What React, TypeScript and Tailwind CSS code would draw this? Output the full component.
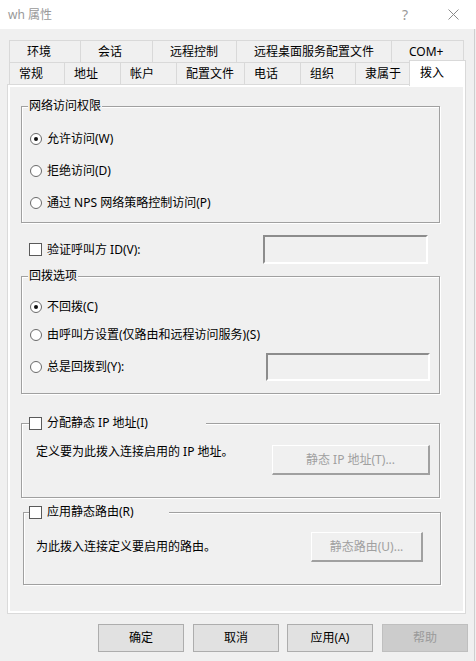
import type { ReactNode } from "react";

const row1 = [
  { label: "环境", w: "w-[71px]" },
  { label: "会话", w: "w-[72px]" },
  { label: "远程控制", w: "w-[84px]" },
  { label: "远程桌面服务配置文件", w: "w-[155px]" },
];

const row2 = [
  { label: "常规", w: "w-[55px]" },
  { label: "地址", w: "w-[56px]" },
  { label: "帐户", w: "w-[56px]" },
  { label: "配置文件", w: "w-[68px]" },
  { label: "电话", w: "w-[56px]" },
  { label: "组织", w: "w-[55px]" },
  { label: "隶属于", w: "w-[54px]" },
];

function Radio({ checked, label }: { checked?: boolean; label: string }) {
  return (
    <label className="flex items-center">
      <span className="ml-[8px] flex h-[12px] w-[12px] items-center justify-center rounded-full border border-[#6a6a6a] bg-white">
        {checked && <span className="h-[4px] w-[4px] rounded-full bg-[#111]" />}
      </span>
      <span className="ml-[5px] leading-[16px]">{label}</span>
    </label>
  );
}

function Check() {
  return <span className="block h-[13px] w-[13px] shrink-0 border border-[#5a5a5a] bg-white" />;
}

function Sunken({ className }: { className: string }) {
  return (
    <div
      className={`border-2 border-t-[#8c8c8c] border-l-[#8c8c8c] border-r-white border-b-white bg-[#f0f0f0] ${className}`}
    />
  );
}

function Group({ className, legend, children }: { className: string; legend: ReactNode; children: ReactNode }) {
  return (
    <fieldset
      className={`border border-[#a0a0a0] shadow-[inset_1px_1px_0_#fff,1px_1px_0_#fff] ${className}`}
    >
      {legend}
      {children}
    </fieldset>
  );
}

function DialogButton({ children, disabled, className }: { children: ReactNode; disabled?: boolean; className: string }) {
  return (
    <button
      className={`flex h-[28px] w-[86px] items-center justify-center border ${
        disabled ? "border-[#bfbfbf] bg-[#cccccc] text-[#9a9a9a]" : "border-[#adadad] bg-[#e1e1e1] text-black"
      } ${className}`}
    >
      {children}
    </button>
  );
}

export default function App() {
  return (
    <div className="flex h-[661px] w-[476px] flex-col overflow-hidden bg-[#f0f0f0] font-['Noto_Sans','Noto_Sans_CJK_SC',sans-serif] text-[12px] text-black">
      {/* title bar */}
      <div className="flex h-[29px] shrink-0 items-center bg-white pl-[8px]">
        <span className="leading-[16px] text-[#999]">wh 属性</span>
        <span className="ml-auto flex w-[46px] justify-center text-[14px] text-[#999]">?</span>
        <span className="ml-[2px] flex w-[46px] justify-center">
          <svg width="11" height="11" viewBox="0 0 11 11">
            <path d="M0.5 0.5 L10.5 10.5 M10.5 0.5 L0.5 10.5" stroke="#8a8a8a" strokeWidth="1" fill="none" />
          </svg>
        </span>
      </div>

      <div className="flex w-[475px] flex-1 flex-col border-r border-[#cfcfcf]">
        {/* tabs */}
        <div className="pl-[9px] pt-[11px]">
          <div className="flex h-[22px]">
            {row1.map((t) => (
              <div key={t.label} className={`${t.w} flex items-center border-l border-t border-[#d9d9d9] pl-[17px] leading-[16px]`}>
                {t.label}
              </div>
            ))}
            <div className="flex w-[73px] items-center border-x border-t border-[#d9d9d9] pl-[17px] leading-[16px]">COM+</div>
          </div>
          <div className="flex h-[22px]">
            {row2.map((t) => (
              <div key={t.label} className={`${t.w} flex items-center border-l border-t border-[#d9d9d9] pl-[9px] leading-[16px]`}>
                {t.label}
              </div>
            ))}
            <div className="relative z-10 -mt-[2px] flex h-[26px] w-[57px] shrink-0 items-start border-x border-t border-[#d9d9d9] bg-white pl-[10px] pt-[4px] leading-[16px]">
              拨入
            </div>
          </div>
        </div>

        {/* tab page */}
        <div className="ml-[7px] h-[530px] w-[459px] border border-[#dadada]">
          <div className="h-full border-2 border-white pl-[11px]">
            <Group
              className="mt-[11px] w-[419px] pb-[3px] pt-[9px]"
              legend={<legend className="ml-[6px] bg-[#f0f0f0] px-[1px] leading-[16px]">网络访问权限</legend>}
            >
              <div className="flex h-[32px] items-center">
                <Radio checked label="允许访问(W)" />
              </div>
              <div className="flex h-[32px] items-center">
                <Radio label="拒绝访问(D)" />
              </div>
              <div className="flex h-[32px] items-center">
                <Radio label="通过 NPS 网络策略控制访问(P)" />
              </div>
            </Group>

            <div className="mt-[12px] flex h-[29px] w-[419px] items-center">
              <span className="ml-[8px]">
                <Check />
              </span>
              <span className="ml-[5px] leading-[16px]">验证呼叫方 ID(V):</span>
              <Sunken className="ml-auto mr-[12px] h-[29px] w-[165px]" />
            </div>

            <Group
              className="mt-[4px] w-[419px] pb-[8px] pt-[9px]"
              legend={<legend className="ml-[6px] bg-[#f0f0f0] px-[1px] leading-[16px]">回拨选项</legend>}
            >
              <div className="flex h-[28px] items-center">
                <Radio checked label="不回拨(C)" />
              </div>
              <div className="flex h-[28px] items-center">
                <Radio label="由呼叫方设置(仅路由和远程访问服务)(S)" />
              </div>
              <div className="flex h-[36px] items-center">
                <Radio label="总是回拨到(Y):" />
                <Sunken className="ml-auto mr-[9px] h-[28px] w-[164px]" />
              </div>
            </Group>

            <Group
              className="mt-[21px] w-[419px] pb-[22px] pl-[14px] pr-[9px] pt-[13px]"
              legend={
                <legend className="ml-[-7px] bg-[#f0f0f0]">
                  <span className="flex h-[16px] w-[177px] items-center">
                    <Check />
                    <span className="ml-[5px] leading-[16px]">分配静态 IP 地址(I)</span>
                  </span>
                </legend>
              }
            >
              <div className="flex items-start justify-between">
                <span className="leading-[16px]">定义要为此拨入连接启用的 IP 地址。</span>
                <div className="mt-[1px] flex h-[30px] w-[158px] items-center justify-center border-l border-t border-b-2 border-r-2 border-l-white border-t-white border-b-[#a0a0a0] border-r-[#a0a0a0] text-[#a0a0a0]">
                  静态 IP 地址(T)...
                </div>
              </div>
            </Group>

            <Group
              className="ml-[2px] mt-[6px] w-[418px] pb-[22px] pl-[12px] pr-[17px] pt-[12px]"
              legend={
                <legend className="ml-[-7px] bg-[#f0f0f0]">
                  <span className="flex h-[16px] w-[140px] items-center">
                    <Check />
                    <span className="ml-[5px] leading-[16px]">应用静态路由(R)</span>
                  </span>
                </legend>
              }
            >
              <div className="flex items-start justify-between">
                <span className="mt-[7px] leading-[16px]">为此拨入连接定义要启用的路由。</span>
                <div className="flex h-[30px] w-[112px] items-center justify-center border-l border-t border-b-2 border-r-2 border-l-white border-t-white border-b-[#a0a0a0] border-r-[#a0a0a0] text-[#a0a0a0]">
                  静态路由(U)...
                </div>
              </div>
            </Group>
          </div>
        </div>

        {/* dialog buttons */}
        <div className="mt-[10px] flex">
          <DialogButton className="ml-[98px]">确定</DialogButton>
          <DialogButton className="ml-[9px]">取消</DialogButton>
          <DialogButton className="ml-[8px]">应用(A)</DialogButton>
          <DialogButton disabled className="ml-[9px]">帮助</DialogButton>
        </div>
      </div>
    </div>
  );
}
